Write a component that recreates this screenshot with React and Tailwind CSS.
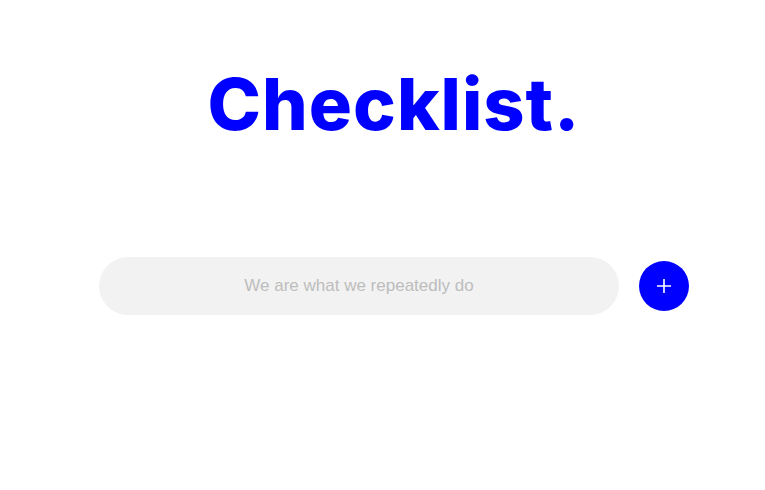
export default function App() {
  return (
    <div className="min-h-[490px] w-full bg-white flex flex-col">
      <h1
        className="mt-[59px] ml-[201px] w-[386px] text-center text-[72px] leading-[90px] font-extrabold text-[#0000ff] tracking-[1px]"
        style={{ fontFamily: "Inter, 'Noto Sans', sans-serif" }}
      >
        Checklist.
      </h1>
      <div className="mt-[108px] ml-[99px] flex items-center gap-[20px]">
        <input
          type="text"
          placeholder="We are what we repeatedly do"
          className="w-[520px] h-[58px] rounded-full bg-[#f2f2f2] text-center text-[17px] text-gray-700 placeholder:text-[#bdbdbd] outline-none"
          style={{ fontFamily: "'Liberation Sans', Arial, sans-serif" }}
        />
        <button className="w-[50px] h-[50px] rounded-full bg-[#0000ff] flex items-center justify-center">
          <svg width="16" height="16" viewBox="0 0 16 16">
            <path d="M8 1v14M1 8h14" stroke="white" strokeWidth="1.6" />
          </svg>
        </button>
      </div>
    </div>
  );
}
